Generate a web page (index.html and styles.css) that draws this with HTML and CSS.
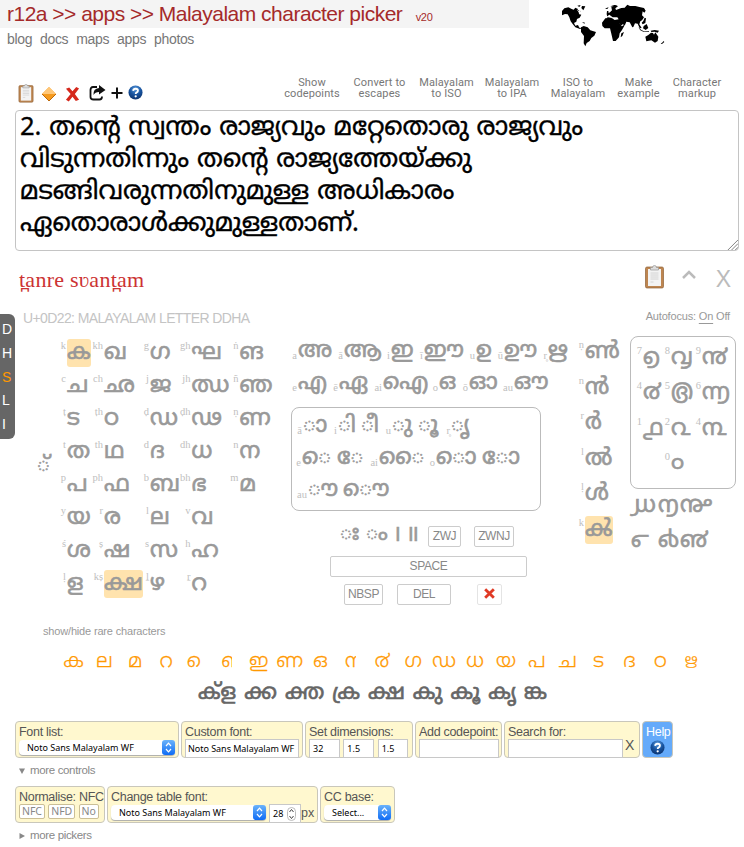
FILE: index.html
```html
<!DOCTYPE html>
<html lang="en">
<head>
<meta charset="utf-8">
<title>Malayalam character picker</title>
<link rel="stylesheet" href="styles.css">
</head>
<body>
<header class="top">
  <div>
    <h1 class="title">r12a &gt;&gt; apps &gt;&gt; Malayalam character picker <small>v20</small></h1>
    <nav class="nav"><a>blog</a><a>docs</a><a>maps</a><a>apps</a><a>photos</a></nav>
  </div>
  <svg class="map" viewBox="570 12 315 129">
    <path d="M570 33l7-8 12-3 10 5 6 2 5-6 8 4-3 6 6-3 5 4-6 8 8 2-5 9-8 4-2 8-7 4 4 8 8-2 4 8 8 1-6 3-14-5-8-10-6-8-4-12-5-9-8-1-9 4zM616 17l10-2-4 6zM630 18l10 1-6 12-6-7zM630 66l9 2-2 3z"/>
    <path d="M627 82l8-4 12 4 8 9 17 5-5 11-9 7-5 9-9 6-4 10-5-9 1-22-9-12z"/>
    <path d="M690 68l10-13 16-2 10 5 12-1 7 17 13 2-8 14-7 10-2 12-10 11-8 0-5-22-4-16-16 0-7-7zM748 100l8-4-5 12-5 4z"/>
    <path d="M706 52l-2-10 10-5 6-6-2-9 12-6 8 3-8 6 2 5 16-6 10-1 8-9 8 4 16 0 12 3 14 3 5 8-4 6-5-4-2 12 6 6-6 9-5 3-3 9 7 11-6 1-6-14-8-1-5 11-3 1-8-15-10-2-4 10-12 3-10-16-6 2-8-8-8-1-6 6zM699 27l6-4 5-1-4 5zM715 19l12-4 10 1-12 5zM705 33l4 0 1 8-6 1z"/>
    <path d="M809 68l5-5 4-10 4 2-2 14-8 4zM799 82l9 8 8 4 15 0 0 2-17-1-9-4zM815 78l9-6 5 12-8 6-8-5zM836 92l12-2 13 2-4 6-9-3-10 1z"/>
    <path d="M820 110l9-5 8-7 6 1 3 5 4-7 9 13-2 13-8 5-11-7-15 3zM866 131l6-4 2-4 3 3-7 6z"/>
    <path class="sea" d="M618 34l5-5 5 10-5 4zM704 50l8-6 10 8 14 0 4 6-12 2-8-6-12-2zM747 77l6-5 2 3-5 4z"/>
  </svg>
</header>

<div class="bar">
  <div class="icons">
    <svg class="i-clip" viewBox="0 0 20 24"><use href="#clip"/></svg>
    <svg class="i-dia" viewBox="0 0 16 16"><path d="M8 1l7 7-7 7-7-7z" fill="#f59a1d"/><path d="M8 1l7 7H1z" fill="#ffc779"/><path d="M1 8l7 7 7-7" fill="none" stroke="#bd690b"/></svg>
    <svg class="i-x" viewBox="0 0 16 16"><path d="M1 2.500l3.500-1.500 3.500 4 4-4.500 3 1.500-4.500 6 4.500 6-3.500 1.500-3.500-4.500-4 5-3-2 5-6z" fill="#d5281c"/></svg>
    <svg class="i-share" viewBox="0 0 17 16"><path d="M8 2H4Q1.500 2 1.500 5v7q0 2.500 3 2.500h6q2.500 0 2.500-3" fill="none" stroke="#111" stroke-width="1.800"/><path d="M10 0l6.500 5-6.500 4.500V7Q6 7 4.500 10 4 3.500 10 3z" fill="#111"/></svg>
    <svg class="i-plus" viewBox="0 0 12 12"><path d="M6 .5v11M.5 6h11" stroke="#111" stroke-width="2"/></svg>
    <svg class="i-help" viewBox="0 0 16 16"><use href="#help"/></svg>
  </div>
  <div class="acts">
    <a>Show<br>codepoints</a><a>Convert to<br>escapes</a><a>Malayalam<br>to ISO</a><a>Malayalam<br>to IPA</a><a>ISO to<br>Malayalam</a><a>Make<br>example</a><a>Character<br>markup</a>
  </div>
</div>

<div class="box" lang="ml"><p>2. തന്റെ സ്വന്തം രാജ്യവും മറ്റേതൊരു രാജ്യവും</p><p>വിടുന്നതിന്നും തന്റെ രാജ്യത്തേയ്ക്കു</p><p>മടങ്ങിവരുന്നതിനുമുള്ള അധികാരം</p><p>ഏതൊരാൾക്കുമുള്ളതാണ്.</p>
  <svg class="grip" viewBox="0 0 12 12"><path d="M1 12L12 1M5 12l7-7M9 12l3-3" stroke="#777" fill="none"/></svg>
</div>

<div class="trans">
  <span class="latin">t̪anre sʋant̪am</span>
  <svg class="clipbig" viewBox="0 0 20 24"><use href="#clip"/></svg>
  <svg class="caret" viewBox="0 0 14 9"><path d="M1 8l6-6 6 6" fill="none" stroke="#bbb" stroke-width="2.500"/></svg>
  <span class="close">X</span>
</div>
<div class="status"><span class="uni">U+0D22: MALAYALAM LETTER DDHA</span><span class="auto">Autofocus: <u>On</u> Off</span></div>

<main class="picker" lang="ml">
  <div class="side"><b>D</b><b>H</b><b class="on">S</b><b>L</b><b>I</b></div>
  <div class="virama">◌്</div>
  <div class="cons">
    <i>k</i><span><em>ക</em></span><i>kh</i><span>ഖ</span><i>g</i><span>ഗ</span><i>gh</i><span>ഘ</span><i>ṅ</i><span>ങ</span>
    <i>c</i><span>ച</span><i>ch</i><span>ഛ</span><i>j</i><span>ജ</span><i>jh</i><span>ഝ</span><i>ñ</i><span>ഞ</span>
    <i>ṭ</i><span>ട</span><i>ṭh</i><span>ഠ</span><i>ḍ</i><span>ഡ</span><i>ḍh</i><span>ഢ</span><i>ṇ</i><span>ണ</span>
    <i>t</i><span>ത</span><i>th</i><span>ഥ</span><i>d</i><span>ദ</span><i>dh</i><span>ധ</span><i>n</i><span>ന</span>
    <i>p</i><span>പ</span><i>ph</i><span>ഫ</span><i>b</i><span>ബ</span><i>bh</i><span>ഭ</span><i>m</i><span>മ</span>
    <i>y</i><span>യ</span><i>r</i><span>ര</span><i>l</i><span>ല</span><i>v</i><span>വ</span><i></i><span></span>
    <i>ś</i><span>ശ</span><i>ṣ</i><span>ഷ</span><i>s</i><span>സ</span><i>h</i><span>ഹ</span><i></i><span></span>
    <i>ḷ</i><span>ള</span><i>kṣ</i><span><em>ക്ഷ</em></span><i>ḻ</i><span>ഴ</span><i>ṟ</i><span>റ</span><i></i><span></span>
  </div>
  <div class="mid">
    <div class="vr v1"><i>a</i><span>അ</span><i>ā</i><span>ആ</span><i>i</i><span>ഇ</span><i>ī</i><span>ഈ</span><i>u</i><span>ഉ</span><i>ū</i><span>ഊ</span><i>r̥</i><span>ഋ</span></div>
    <div class="vr v2"><i>e</i><span>എ</span><i>ē</i><span>ഏ</span><i>ai</i><span>ഐ</span><i>o</i><span>ഒ</span><i>ō</i><span>ഓ</span><i>au</i><span>ഔ</span></div>
    <div class="signs">
      <div class="vr s1"><i>ā</i><span>◌ാ</span><i>i</i><span>◌ി</span><span>◌ീ</span><i>u</i><span>◌ു</span><span>◌ൂ</span><i>r̥</i><span>◌ൃ</span></div>
      <div class="vr s2"><i>e</i><span>◌െ</span><span>◌േ</span><i>ai</i><span>◌ൈ</span><i>o</i><span>◌ൊ</span><span>◌ോ</span></div>
      <div class="vr s3"><i>au</i><span>◌ൗ</span><span>◌ൌ</span></div>
    </div>
    <div class="keys k1"><span class="g">◌ഃ</span><span class="g">◌ം</span><span class="g">।</span><span class="g">॥</span><a>ZWJ</a><a>ZWNJ</a></div>
    <div class="keys k2"><a>SPACE</a></div>
    <div class="keys k3"><a>NBSP</a><a>DEL</a><a class="del"><svg viewBox="0 0 12 12"><path d="M2 2l8 8M10 2l-8 8" stroke="#e03a25" stroke-width="2.600"/></svg></a></div>
  </div>
  <div class="chillu"><i>ṇ</i><span>ൺ</span><i>n</i><span>ൻ</span><i>r</i><span>ർ</span><i>l</i><span>ൽ</span><i>ḷ</i><span>ൾ</span><i>k</i><span><em>ൿ</em></span></div>
  <div class="nums">
    <div class="digits"><i>7</i><span>൭</span><i>8</i><span>൮</span><i>9</i><span>൯</span><i>4</i><span>൪</span><i>5</i><span>൫</span><i>6</i><span>൬</span><i>1</i><span>൧</span><i>2</i><span>൨</span><i>4</i><span>൩</span><i></i><span></span><i>0</i><span>൦</span></div>
    <div class="fr"><span>൰</span><span>൱</span><span>൲</span></div>
    <div class="fr"><span>൳</span><span>൴</span><span>൵</span></div>
  </div>
</main>

<div class="rare">show/hide rare characters</div>
<div class="shapes" lang="ml"><span>ക</span><span>ല</span><span>മ</span><span>റ</span><span>&nbsp;െ</span><span class="part">ണ</span><span>ഇ</span><span>ണ</span><span>ഒ</span><span class="part">ന</span><span>൪</span><span>ഗ</span><span>ഡ</span><span>ധ</span><span>യ</span><span>പ</span><span>ച</span><span>ട</span><span>ദ</span><span>ഠ</span><span class="sm">ഋ</span></div>
<div class="conj" lang="ml"><span>ക്‌ള</span><span>ക്ക</span><span>ക്ത</span><span>ക്ര</span><span>ക്ഷ</span><span>കു</span><span>കൂ</span><span>കൃ</span><span>ങ്ക</span></div>

<div class="panel p1">
  <div class="c w1"><label>Font list:</label><div class="row"><span class="sel">Noto Sans Malayalam WF<svg viewBox="0 0 13 15"><use href="#ud"/></svg></span></div></div>
  <div class="c w2"><label>Custom font:</label><div class="row"><span class="in">Noto Sans Malayalam WF</span></div></div>
  <div class="c w3"><label>Set dimensions:</label><div class="row"><span class="in">32</span><span class="in">1.5</span><span class="in">1.5</span></div></div>
  <div class="c w4"><label>Add codepoint:</label><div class="row"><span class="in"></span></div></div>
  <div class="c w5"><label>Search for:</label><div class="row"><span class="in"></span><span class="xx">X</span></div></div>
  <div class="c help"><label>Help</label><svg viewBox="0 0 16 16"><use href="#help"/></svg></div>
</div>
<div class="more"><svg viewBox="0 0 6 6"><path d="M0 0.500h6L3 6z" fill="#888"/></svg>more controls</div>
<div class="panel p2">
  <div class="c w6"><label>Normalise: NFC</label><div class="row"><span class="nf">NFC</span><span class="nf">NFD</span><span class="nf">No</span></div></div>
  <div class="c w7"><label>Change table font:</label><div class="row"><span class="sel">Noto Sans Malayalam WF<svg viewBox="0 0 13 15"><use href="#ud"/></svg></span><span class="in num">28<svg viewBox="0 0 9 14"><rect x=".5" y=".5" width="8" height="13" rx="4" fill="#fff" stroke="#bbb"/><path d="M2.500 5l2-2.500 2 2.500M2.500 9l2 2.500 2-2.500" fill="none" stroke="#444"/></svg></span><span class="px">px</span></div></div>
  <div class="c w8"><label>CC base:</label><div class="row"><span class="sel">Select...<svg viewBox="0 0 13 15"><use href="#ud"/></svg></span></div></div>
</div>
<div class="more"><svg viewBox="0 0 6 6"><path d="M0.500 0v6L6 3z" fill="#888"/></svg>more pickers</div>

<svg class="defs" width="0" height="0">
  <defs>
    <linearGradient id="blue" x1="0" y1="0" x2="0" y2="1"><stop offset="0" stop-color="#6bb3fa"/><stop offset="1" stop-color="#0f6cf5"/></linearGradient>
    <radialGradient id="ball" cx=".5" cy=".25" r=".8"><stop offset="0" stop-color="#5f9fe0"/><stop offset=".5" stop-color="#17539f"/><stop offset="1" stop-color="#0b2f68"/></radialGradient>
    <g id="clip"><rect x="1" y="2" width="18" height="21" rx="1.500" fill="#bd8550" stroke="#8f6238" stroke-width=".7"/><path d="M3.500 4h13v17h-13z" fill="#f3f3f3"/><path d="M6 2.500h2Q8 .5 10 .5t2 2h2V5H6z" fill="#ddd" stroke="#999" stroke-width=".7"/><path d="M6 8h8M6 10h8M6 12h8M6 14h8M6 17h3" stroke="#d4d4d4"/></g>
    <g id="help"><circle cx="8" cy="8" r="7.500" fill="url(#ball)"/><path d="M5.500 6.200Q5.700 4 8.200 4q2.400 0 2.400 2 0 1.200-1.300 1.900Q8.200 8.500 8.200 9.600" fill="none" stroke="#fff" stroke-width="1.900"/><circle cx="8.200" cy="12" r="1.200" fill="#fff"/></g>
    <g id="ud"><rect width="13" height="15" rx="3" fill="url(#blue)"/><path d="M4 6l2.500-2.800L9 6M4 9l2.500 2.800L9 9" fill="none" stroke="#fff" stroke-width="1.200"/></g>
  </defs>
</svg>
</body>
</html>
```
FILE: styles.css
```css
* { box-sizing: border-box; }
body { margin: 0; width: 744px; height: 847px; overflow: hidden; background: #fff; color: #777; font-family: "Liberation Sans", sans-serif; position: relative; }
i, em, b { font-style: normal; font-weight: normal; }
p { margin: 0; }
svg { display: block; flex: none; }
.defs { position: absolute; }
span, a, label, i { white-space: nowrap; }

.top { display: flex; height: 75px; }
.top > div { width: 529px; margin-right: 33px; }
.title { margin: 0; height: 28px; padding-left: 7px; background: #f4f4f4; color: #a52a2a; font: 21px/28px "Liberation Sans", sans-serif; letter-spacing: -.51px; }
.title small { font-size: 11px; margin-left: 8px; letter-spacing: -.3px; }
.nav { display: flex; gap: 8px; padding-left: 7px; font-size: 14px; line-height: 23px; letter-spacing: -.35px; }
.map { width: 105px; height: 43px; margin-top: 4px; }
.map .sea { fill: #fff; }

.bar { display: flex; height: 35px; justify-content: space-between; }
.icons { display: flex; padding: 9px 0 0 18px; align-items: flex-start; }
.i-clip { width: 16px; height: 19px; }
.i-dia { width: 16px; height: 16px; margin: 2px 0 0 7px; }
.i-x { width: 15px; height: 16px; margin: 2px 0 0 8px; }
.i-share { width: 17px; height: 16px; margin-left: 9px; margin-top: 1px; }
.i-plus { width: 12px; height: 12px; margin: 3px 0 0 5px; }
.i-help { width: 15px; height: 15px; margin: 1px 0 0 5px; }
.acts { display: grid; grid-template-columns: 66px 69px 65px 66px 66px 55px 62px; padding: 2px 16px 0 0; text-align: center; font: 11px/11px Roboto, sans-serif; letter-spacing: .12px; }

.box { position: relative; margin-left: 15px; width: 724px; height: 141px; border: 1px solid #c4c4c4; border-radius: 4px; padding: 2px 4px 0; color: #000; font: 25.550px/32px "Noto Sans Malayalam", "Noto Sans", sans-serif; -webkit-text-stroke: .35px; white-space: nowrap; }
.grip { position: absolute; right: 0; bottom: 0; width: 11px; height: 11px; }

.trans { display: flex; height: 57px; padding: 15px 12px 0 19px; }
.latin { flex: 1; color: #c33; font: 22px/28px "Liberation Serif", serif; letter-spacing: .25px; }
.clipbig { width: 21px; height: 24px; margin: -1px 17px 0 0; }
.caret { width: 14px; height: 9px; margin: 4px 20px 0 0; }
.close { font-size: 23px; line-height: 26px; color: #bbb; margin-right: 1px; }
.status { display: flex; justify-content: space-between; height: 28px; padding: 0 14px 0 23px; color: #c4c4c4; font-size: 14px; line-height: 20px; }
.uni { letter-spacing: -.61px; }
.auto { font-size: 11px; line-height: 16px; color: #999; letter-spacing: -.17px; }
.auto u { text-underline-offset: 3px; }

.picker { position: relative; height: 288px; display: flex; color: #999; font: 22.800px/28px "Noto Sans Malayalam", "Noto Sans", sans-serif; -webkit-text-stroke: .6px; }
.picker i { font: 10.500px/12px "Liberation Serif", serif; color: #c0c0c0; display: flex; justify-content: flex-end; padding: 1px 1px 0 0; -webkit-text-stroke: 0; }
.picker em { display: inline-block; height: 28px; background: #ffe3ae; border-radius: 3px; }
.side { position: absolute; left: 0; top: -22px; width: 15px; height: 125px; border-radius: 0 6px 6px 0; background: #666; color: #fff; font: 14px/23.800px "Liberation Sans", sans-serif; -webkit-text-stroke: 0; padding: 4px 0 0 2px; display: flex; flex-direction: column; }
.side .on { color: #f90; }
.virama { width: 50px; padding: 117px 0 0 37px; white-space: nowrap; }
.cons { display: grid; grid-template-columns: 17px 20px 17px 38.500px 7.500px 28.500px 13px 36.500px 11.500px 40px; grid-auto-rows: 33px; width: 241px; padding-top: 3px; }
.cons span { padding-top: 1px; }
.cons em { margin-top: -1px; padding-top: 1px; }
.mid { width: 286px; padding-top: 2px; }
.vr { display: grid; height: 32px; }
.mid .vr i { align-self: start; padding-top: 12px; }
.v1 { grid-template-columns: 7px 38px 8px 42px 5px 28px 5px 44px 8px 20px 8px 38px 6px 20px; }
.v2 { grid-template-columns: 7px 34px 7px 34px 10px 49px 7px 22px 8px 33px 12px 30px; }
.signs { width: 250px; height: 104px; border: 1px solid #bbb; border-radius: 8px; margin-top: 5px; padding: 5px 0 0 4px; }
.s1 { grid-template-columns: 7px 29px 6px 23px 23px 8px 26px 26px 7px 26px; }
.s2 { grid-template-columns: 6px 35px 32px 10px 50px 7px 46px 36px; }
.s3 { grid-template-columns: 12px 35px 50px; }
.keys { display: flex; font-size: 12px; line-height: 19px; }
.keys a { border: 1px solid #ccc; border-radius: 2px; height: 21px; text-align: center; font: 12px/19px "Liberation Sans", sans-serif; letter-spacing: -.4px; color: #888; -webkit-text-stroke: 0; }
.k1 { padding: 15px 0 0 49px; height: 45px; }
.keys .g { font-size: 21.500px; line-height: 17px; }
.k1 > :nth-child(1) { width: 26px; } .k1 > :nth-child(2) { width: 27px; } .k1 > :nth-child(3) { width: 13px; } .k1 > :nth-child(4) { width: 22px; }
.k1 > :nth-child(5) { width: 33px; margin-right: 13px; } .k1 > :nth-child(6) { width: 40px; }
.k2 { padding-left: 39px; height: 28px; } .k2 a { width: 197px; }
.k3 { padding-left: 53px; } .k3 a:nth-child(1) { width: 39px; margin-right: 14px; } .k3 a:nth-child(2) { width: 54px; margin-right: 26px; }
.k3 .del { width: 25px; border-color: #e4e4e4; padding: 2px 0 0 5px; } .del svg { width: 13px; height: 13px; }
.chillu { width: 53px; display: grid; grid-template-columns: 8px 45px; grid-auto-rows: 35.500px; padding-top: 2px; align-content: start; }
.chillu span, .digits span { padding-top: 1px; }
.chillu em { margin-top: -1px; padding-top: 1px; }
.nums { width: 110px; }
.digits { width: 106px; height: 153px; border: 1px solid #bbb; border-radius: 8px; display: grid; grid-template-columns: 12px 20px 8px 22px 9px 30px; grid-auto-rows: 35.300px; padding: 7px 0 0 0; align-content: start; }
.fr { display: grid; grid-template-columns: 27px 22px 30px; height: 34.500px; padding: 4px 0 0 1px; }

.rare { height: 26px; padding-left: 43px; font-size: 11px; letter-spacing: -.17px; line-height: 15px; color: #999; }
.shapes { display: grid; grid-template-columns: repeat(21, 30.900px); padding-left: 58px; height: 30px; color: #f90; font: 300 20px/26px "Noto Sans Malayalam", "Noto Sans", sans-serif; -webkit-text-stroke: .3px; text-align: center; }
.shapes span { display: flex; justify-content: center; }
.shapes .part { width: 11px; justify-content: flex-start; overflow: hidden; margin-left: 9px; }
.shapes .sm { font-size: 15px; line-height: 23px; }
.conj { display: flex; justify-content: center; gap: 8px; height: 41px; color: #666; font: 21.700px/28px "Noto Sans Malayalam", "Noto Sans", sans-serif; -webkit-text-stroke: .6px; padding-left: 1px; }

.panel { display: flex; gap: 2px; padding-left: 15px; height: 37px; }
.c { height: 37px; border: 1px solid #c9c7bb; border-radius: 4px; background: #fff8cf; padding: 3px 3px 0; color: #555; font-size: 12.500px; line-height: 15px; }
.c label { display: block; letter-spacing: -.3px; }
.row { display: flex; height: 18px; margin-top: -1px; }
.in { height: 19px; border: 1px solid #c8c8c8; background: #fff; color: #000; font: 9px/18px "Noto Sans", sans-serif; padding-left: 3px; }
.sel { position: relative; display: flex; justify-content: space-between; height: 15px; margin-top: 1px; background: #fff; border-radius: 4px; box-shadow: 0 1px 1px #aaa; color: #000; font: 9px/15px "Noto Sans", sans-serif; padding-left: 8px; }
.sel svg { width: 13px; height: 15px; }
.w1 { width: 164px; } .w1 .sel { width: 156px; }
.w2 { width: 122px; } .w2 .in { width: 115px; padding-left: 2px; letter-spacing: -.03px; }
.w3 { width: 108px; padding-right: 0; } .w3 .in { width: 31px; margin-right: 3.500px; }
.w4 { width: 87px; padding-right: 0; } .w4 .in { width: 80px; }
.w5 { width: 136px; } .w5 .in { width: 115px; } .xx { font-size: 14px; padding-left: 2px; line-height: 12px; }
.help { width: 31px; background: #64aafa; color: #fff; } .help svg { width: 15px; height: 15px; margin: 0 0 0 4px; }
.w6 { width: 90px; padding-right: 0; } .nf { border: 1px solid #cbbf96; border-radius: 2px; height: 15px; padding: 0 2px; margin-right: 3.500px; background: #fff; font: 10.500px/13px "Noto Sans", sans-serif; color: #888; letter-spacing: -.1px; }
.w7 { width: 211px; padding-right: 0; } .w7 .sel { width: 155px; margin-right: 3px; } .num { width: 32px; display: flex; justify-content: space-between; padding-right: 4px; } .num svg { width: 9px; height: 14px; margin-top: 2px; } .px { padding: 2px 0 0 0; }
.w8 { width: 75px; } .w8 .sel { width: 67px; }
.more { display: flex; height: 28px; padding: 5px 0 0 19px; color: #888; font-size: 11.500px; letter-spacing: -.35px; line-height: 15px; }
.more svg { width: 6px; height: 6px; margin: 5px 5px 0 0; }
```
